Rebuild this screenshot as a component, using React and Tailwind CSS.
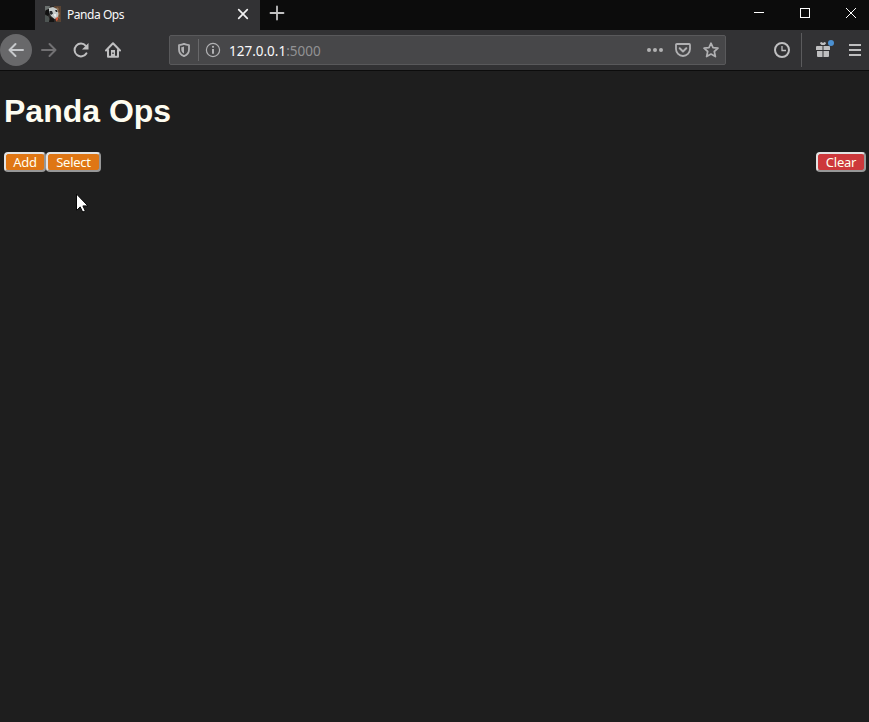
const stroke = { fill: "none", stroke: "currentColor", strokeWidth: 2, strokeLinecap: "round", strokeLinejoin: "round" };

function PandaFavicon() {
  return (
    <svg className="block h-4 w-4" viewBox="0 0 16 16">
      <rect width="16" height="16" fill="#2b2a29" />
      <path d="M9 0h7v16h-5z" fill="#5b4433" />
      <path d="M12 1l2 2-1 2 2 2-1 3 1 3-3-2 1-4-2-3z" fill="#8d6848" />
      <path d="M0 9l3 1 3 5-2 1H0z" fill="#4e5553" />
      <path d="M0 0h5L4 3 1 5 0 4z" fill="#6b716f" />
      <path d="M1 4l3-1 1 4-2 3-3-2z" fill="#121212" />
      <path d="M4 2l4-1 4 2 1.500 5-1 4-3 1L6 10 4 6z" fill="#c5cac9" />
      <path d="M4.500 5l2.500 0 1 2.500-2 1.500-1.500-2zM10 4l2 0 .5 2-1.500 0z" fill="#24272a" />
      <path d="M9 8l2 0 0 3-2-1z" fill="#eceeed" />
      <path d="M10.500 12l2.500-1v3l-2 1z" fill="#d0563a" />
      <path d="M5 11l4 2v3H4z" fill="#151413" />
    </svg>
  );
}

function TabStrip() {
  return (
    <div className="flex h-[30px] bg-[#0c0c0c]">
      <div className="ml-[35px] flex w-[225px] items-center bg-[#323234] pr-[11px] pl-[10px]">
        <div className="mb-[3px]"><PandaFavicon /></div>
        <span className="ml-[6px] text-[12px] leading-[30px] tracking-[-0.45px] text-[#f9f9fa]">Panda Ops</span>
        <svg className="mb-[2px] ml-auto h-3 w-3 text-[#f0f0f1]" viewBox="0 0 12 12">
          <path d="M1.7 1.7l8.6 8.6M10.3 1.7l-8.6 8.6" {...stroke} strokeWidth="1.7" />
        </svg>
      </div>
      <svg className="mt-[5px] ml-[9px] h-4 w-4 text-[#c2c2c3]" viewBox="0 0 16 16">
        <path d="M8 1.500v13M1.500 8h13" {...stroke} strokeWidth="1.800" />
      </svg>
      <div className="ml-auto flex text-white">
        <svg className="h-[30px] w-[46px]" viewBox="0 0 46 30"><path d="M18 12.5h10" stroke="currentColor" /></svg>
        <svg className="h-[30px] w-[46px]" viewBox="0 0 46 30"><rect x="18.500" y="8.500" width="9" height="9" fill="none" stroke="currentColor" /></svg>
        <svg className="-mr-[5px] h-[30px] w-[46px]" viewBox="0 0 46 30"><path d="M18 8l10 10M28 8l-10 10" stroke="currentColor" fill="none" /></svg>
      </div>
    </div>
  );
}

function AddressBar() {
  return (
    <div className="flex h-[30px] w-[557px] items-center rounded-[2px] border border-[#59595b] bg-[#474749] text-[#b1b1b3]">
      <svg className="ml-[6px] h-4 w-4" viewBox="0 0 16 16">
        <path d="M8 1.900c1.700.8 3.500 1.100 5 1.200v4.500c0 3.400-2 5.500-5 6.600-3-1.100-5-3.200-5-6.600V3.100c1.500-.1 3.300-.4 5-1.200z" {...stroke} strokeWidth="1.800" />
        <path d="M8 4.500v7.100C6.100 10.500 5.300 9.400 5.300 7.500V5.200c1-.1 1.900-.3 2.700-.7z" fill="currentColor" />
      </svg>
      <div className="ml-[6px] h-[22px] w-px bg-[#68686a]" />
      <svg className="ml-[6px] h-4 w-4" viewBox="0 0 16 16">
        <circle cx="8" cy="8" r="6.600" fill="none" stroke="currentColor" strokeWidth="1.200" />
        <circle cx="8" cy="4.800" r="1.100" fill="currentColor" />
        <path d="M8 7v4.800" stroke="currentColor" strokeWidth="2" />
      </svg>
      <span className="ml-[8px] pt-[2px] text-[13.5px] leading-[28px] text-[#f9f9fa]">127.0.0.1<span className="text-[#929294]">:5000</span></span>
      <svg className="ml-auto h-4 w-4" viewBox="0 0 16 16" fill="currentColor">
        <circle cx="2" cy="8" r="2" /><circle cx="8" cy="8" r="2" /><circle cx="14" cy="8" r="2" />
      </svg>
      <svg className="ml-[12px] h-4 w-4" viewBox="0 0 16 16">
        <path d="M1.900 2h12.200q.9 0 .9.900V7a7 7 0 0 1-14 0V2.900Q1 2 1.900 2z" {...stroke} strokeWidth="1.800" />
        <path d="M4.700 6.300L8 9.500l3.300-3.200" {...stroke} />
      </svg>
      <svg className="mr-[6px] ml-[12px] h-4 w-4" viewBox="0 0 16 16">
        <path d="M8 1.200l2 4.500 5 .5-3.700 3.300 1.100 5.100L8 12.100l-4.400 2.500 1.100-5.100L1 6.200l5-.5z" {...stroke} strokeWidth="1.700" />
      </svg>
    </div>
  );
}

function Toolbar() {
  return (
    <div className="flex h-[41px] items-center border-b border-[#0c0c0c] bg-[#323234] text-[#bfbfc0]">
      <div className="flex h-8 w-8 items-center justify-center rounded-full bg-[#68686a] text-[#c6c8cb]">
        <svg className="h-4 w-4" viewBox="0 0 16 16"><path d="M15 8H1.500M7.500 2l-6 6 6 6" {...stroke} /></svg>
      </div>
      <svg className="ml-[9px] h-4 w-4 text-[#727173]" viewBox="0 0 16 16"><path d="M1 8h13.500M8.500 2l6 6-6 6" {...stroke} /></svg>
      <svg className="ml-4 h-4 w-4" viewBox="0 0 16 16">
        <path d="M13.400 11.400A6.400 6.400 0 1 1 12.800 3.800" {...stroke} strokeWidth="2" />
        <path d="M15.500 1v6.500H9z" fill="currentColor" />
      </svg>
      <svg className="ml-4 h-4 w-4" viewBox="0 0 16 16">
        <path d="M1 8.500L8 1.300l7 7.200M3 8v6.800h10V8" {...stroke} strokeWidth="2" />
        <path d="M6 8h4v7H6z" fill="currentColor" />
        <path d="M7.300 10.500h1.400v1.400H7.300z" fill="#323234" />
      </svg>
      <div className="ml-[48px]"><AddressBar /></div>
      <svg className="ml-[48px] h-4 w-4" viewBox="0 0 16 16">
        <circle cx="8" cy="8" r="7" fill="none" stroke="currentColor" strokeWidth="2" />
        <path d="M8 4v4.500h4" fill="none" stroke="currentColor" strokeWidth="1.300" />
      </svg>
      <div className="ml-[11px] h-[34px] w-px bg-[#5b5b5d]" />
      <svg className="ml-[13px] h-5 w-5" viewBox="0 0 20 20">
        <path d="M2 6h5.500v4H1V7q0-1 1-1zM8.500 6H14q1 0 1 1v3H8.500zM2 11h5.500v6H3q-1 0-1-1zM8.500 11H14v5q0 1-1 1H8.500z" fill="currentColor" />
        <path d="M5 3.500Q5 2 6.500 2L8 3l1.500-1Q11 2 11 3.500L9.500 5h-3z" fill="currentColor" />
        <circle cx="16" cy="3" r="3" fill="#4b90d1" />
      </svg>
      <svg className="ml-[12px] h-4 w-4" viewBox="0 0 16 16"><path d="M2 3h12M2 8h12M2 13h12" {...stroke} strokeLinecap="butt" /></svg>
    </div>
  );
}

const buttonBase = "h-5 rounded-[4px] border-2 border-t-[#e3e3e3] border-l-[#e3e3e3] border-r-[#979797] border-b-[#979797] text-center text-[13px] leading-[16px] tracking-[-0.25px] text-[#fffff0]";

export default function App() {
  return (
    <div className="relative h-[722px] w-[869px] overflow-hidden bg-[#1e1e1e] font-['Noto_Sans',sans-serif]">
      <TabStrip />
      <Toolbar />
      <main className="pt-[21px] pr-[3px] pl-[4px]">
        <h1 className="font-['Liberation_Sans',Arial,sans-serif] text-[32px] leading-[38px] font-bold text-[#fdfcf0]">Panda Ops</h1>
        <div className="mt-[22px] flex">
          <button className={buttonBase + " w-[42px] bg-[#df7614]"}>Add</button>
          <button className={buttonBase + " w-[55px] bg-[#df7614]"}>Select</button>
          <button className={buttonBase + " ml-auto w-[50px] bg-[#cd383b]"}>Clear</button>
        </div>
      </main>
      <svg className="absolute top-[193px] left-[76px] h-[20px] w-[13px]" viewBox="0 0 13 20">
        <path d="M.5 1v16.500l3.700-3.600 2.500 5.200 2.600-1.200-2.400-5h5z" fill="#fff" stroke="#080808" strokeWidth="1" />
      </svg>
    </div>
  );
}
